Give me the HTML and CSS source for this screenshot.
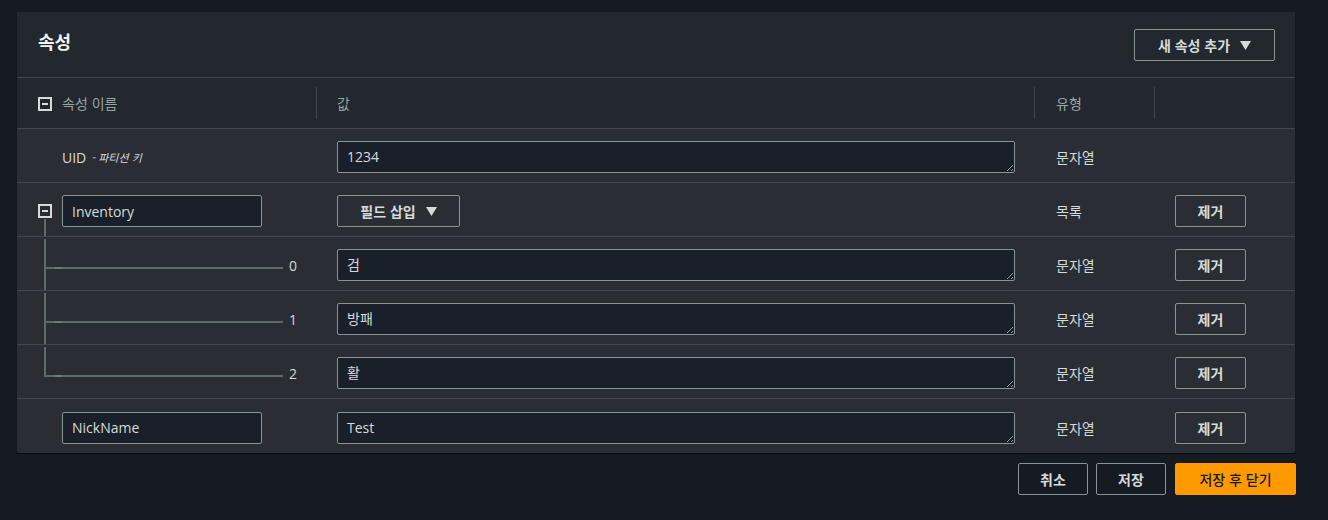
FILE: index.html
```html
<!DOCTYPE html>
<html lang="ko">
<head>
<meta charset="utf-8">
<title>속성</title>
<link rel="stylesheet" href="styles.css">
</head>
<body>
<div class="page">
  <section class="panel">
    <header class="panel-head">
      <h2 class="title">속성</h2>
      <button class="btn btn-add">새 속성 추가 <svg class="caret" viewBox="0 0 10 8" width="11" height="9"><path d="M0 0H10L5 8Z" fill="currentColor"/></svg></button>
    </header>
    <div class="table">
      <div class="row row-head">
        <div class="cell cell-name"><span class="toggle"></span><span class="head-label">속성 이름</span></div>
        <div class="cell cell-value sep"><span class="head-label">값</span></div>
        <div class="cell cell-type sep"><span class="head-label">유형</span></div>
        <div class="cell cell-act sep"></div>
      </div>

      <div class="row">
        <div class="cell cell-name indent"><span class="key">UID</span><span class="key-note">- 파티션 키</span></div>
        <div class="cell cell-value"><textarea class="field" rows="1">1234</textarea></div>
        <div class="cell cell-type">문자열</div>
        <div class="cell cell-act"></div>
      </div>

      <div class="row">
        <div class="cell cell-name parent"><span class="toggle"></span><input class="name-input" value="Inventory"></div>
        <div class="cell cell-value"><button class="btn btn-insert">필드 삽입 <svg class="caret" viewBox="0 0 10 8" width="11" height="9"><path d="M0 0H10L5 8Z" fill="currentColor"/></svg></button></div>
        <div class="cell cell-type">목록</div>
        <div class="cell cell-act"><button class="btn btn-remove">제거</button></div>
      </div>

      <div class="row">
        <div class="cell cell-name tree"><span class="index">0</span></div>
        <div class="cell cell-value"><textarea class="field" rows="1">검</textarea></div>
        <div class="cell cell-type">문자열</div>
        <div class="cell cell-act"><button class="btn btn-remove">제거</button></div>
      </div>

      <div class="row">
        <div class="cell cell-name tree"><span class="index">1</span></div>
        <div class="cell cell-value"><textarea class="field" rows="1">방패</textarea></div>
        <div class="cell cell-type">문자열</div>
        <div class="cell cell-act"><button class="btn btn-remove">제거</button></div>
      </div>

      <div class="row">
        <div class="cell cell-name tree last"><span class="index">2</span></div>
        <div class="cell cell-value"><textarea class="field" rows="1">활</textarea></div>
        <div class="cell cell-type">문자열</div>
        <div class="cell cell-act"><button class="btn btn-remove">제거</button></div>
      </div>

      <div class="row row-last">
        <div class="cell cell-name indent"><input class="name-input" value="NickName"></div>
        <div class="cell cell-value"><textarea class="field" rows="1">Test</textarea></div>
        <div class="cell cell-type">문자열</div>
        <div class="cell cell-act"><button class="btn btn-remove">제거</button></div>
      </div>
    </div>
  </section>
  <div class="footer">
    <button class="btn btn-foot btn-cancel">취소</button>
    <button class="btn btn-foot btn-save">저장</button>
    <button class="btn btn-foot btn-primary">저장 후 닫기</button>
  </div>
</div>
</body>
</html>
```

FILE: styles.css
```css
* { box-sizing: border-box; }

html, body {
  margin: 0;
  background: #161a23;
  color: #d5dbdb;
  font-family: "Open Sans", "Noto Sans CJK KR", sans-serif;
  font-size: 14px;
}

.page {
  width: 1279px;
  padding-top: 12px;
  margin-left: 17px;
}

.panel {
  width: 1278px;
  background: #2a2d33;
  box-shadow: 0 1px 1px rgba(0, 0, 0, 0.5);
}

.panel-head {
  height: 66px;
  display: flex;
  align-items: center;
  justify-content: space-between;
  padding: 0 20px 0 21px;
  background: #23272e;
  border-bottom: 1px solid #414750;
}

.title {
  margin: 0 0 8px;
  font-size: 18px;
  font-weight: 700;
  color: #f2f3f3;
  font-family: "Noto Sans CJK KR", sans-serif;
}

.btn {
  font-family: "Noto Sans CJK KR", sans-serif;
  font-size: 14px;
  font-weight: 700;
  color: #d5dbdb;
  background: transparent;
  border: 1px solid #879596;
  border-radius: 2px;
  display: inline-flex;
  align-items: center;
  justify-content: center;
  gap: 10px;
  padding: 0;
  cursor: pointer;
}

.btn-add {
  width: 141px;
  height: 32px;
  margin-top: 1px;
}

.caret { display: block; margin-top: 1px; }

.table { display: flex; flex-direction: column; }

.row {
  display: grid;
  grid-template-columns: 299px 718px 120px 141px;
  height: 54px;
  border-bottom: 1px solid #414750;
  padding-top: 3px;
}

.row-head {
  height: 51px;
  background: #23272e;
  padding-top: 0;
}

.row-last { border-bottom: none; height: 54px; }

.cell {
  display: flex;
  align-items: center;
  padding-left: 21px;
}

.cell-name { position: relative; }
.cell-value { padding-right: 19px; }
.cell-type { padding-left: 22px; }

.sep { position: relative; }
.sep::before {
  content: "";
  position: absolute;
  left: 0;
  top: 9px;
  bottom: 9px;
  width: 1px;
  background: #414750;
}

.head-label {
  color: #95a5a6;
  font-family: "Noto Sans CJK KR", sans-serif;
}

.toggle {
  width: 14px;
  height: 14px;
  border: 2px solid #d5dbdb;
  margin-right: 10px;
  position: relative;
  flex: none;
}

.toggle::after {
  content: "";
  position: absolute;
  left: 2px;
  right: 2px;
  top: 4px;
  height: 2px;
  background: #d5dbdb;
}

.row-head .toggle { margin-top: 1px; }

.indent { padding-left: 45px; }

.key { font-family: "Open Sans", sans-serif; }
.key-note {
  font-size: 11px;
  font-style: italic;
  margin-left: 5px;
  font-family: "Noto Sans CJK KR", sans-serif;
}

.name-input {
  width: 200px;
  height: 32px;
  background: #1a2029;
  border: 1px solid #879596;
  border-radius: 2px;
  color: #d5dbdb;
  font-family: "Open Sans", "Noto Sans CJK KR", sans-serif;
  font-size: 14px;
  padding: 0 9px;
  outline: none;
}

.parent::after {
  content: "";
  position: absolute;
  left: 27px;
  top: 33px;
  bottom: 0;
  width: 2px;
  background: #5f6b6b;
}

.field {
  width: 100%;
  height: 32px;
  min-height: 32px;
  resize: vertical;
  background: #1a2029;
  border: 1px solid #879596;
  border-radius: 2px;
  color: #d5dbdb;
  font-family: "Open Sans", "Noto Sans CJK KR", sans-serif;
  font-size: 14px;
  line-height: 20px;
  padding: 5px 9px;
  outline: none;
  overflow: hidden;
  color-scheme: dark;
  display: block;
}

.btn-insert { width: 123px; height: 32px; }

.btn-remove { width: 71px; height: 32px; }

.tree {
  justify-content: flex-end;
  padding-right: 19px;
}

.tree::before {
  content: "";
  position: absolute;
  left: 27px;
  top: -1px;
  bottom: 0;
  width: 2px;
  background: #5f6b6b;
}

.tree.last::before { bottom: auto; height: 29px; }

.tree::after {
  content: "";
  position: absolute;
  left: 27px;
  right: 33px;
  top: 27px;
  height: 2px;
  background: linear-gradient(to right, #5f6b6b 11px, #6f7b7b 11px, #6f7b7b 18px, #5f6b6b 18px);
}

.index {
  font-family: "Open Sans", sans-serif;
  font-size: 14px;
}

.footer {
  display: flex;
  justify-content: flex-end;
  gap: 8px;
  margin-top: 10px;
}

.btn-foot { height: 32px; }
.btn-cancel { width: 70px; }
.btn-save { width: 70px; }
.btn-primary {
  width: 121px;
  margin-left: 1px;
  background: #ff9900;
  border-color: #ff9900;
  color: #16191f;
  font-weight: 500;
}
```
